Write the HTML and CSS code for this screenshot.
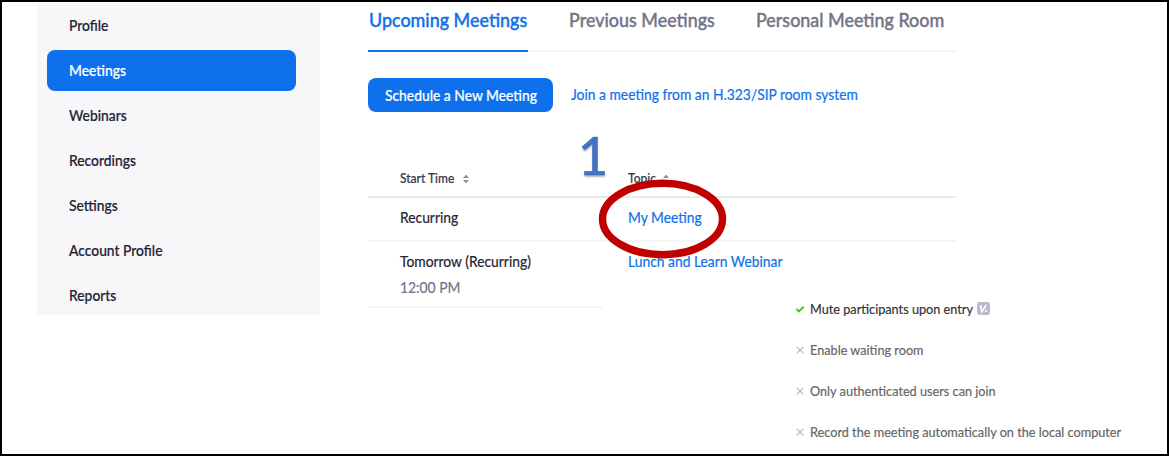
FILE: index.html
```html
<!DOCTYPE html>
<html lang="en">
<head>
  <meta charset="UTF-8" />
  <meta name="viewport" content="width=device-width, initial-scale=1.0"/>
  <title>Meetings</title>
  <link rel="stylesheet" href="styles.css">
</head>
<body>
  <div class="frame">
    <nav class="sidebar">
      <a href="#"><span class="txt">Profile</span></a>
      <a href="#" class="active"><span class="txt">Meetings</span></a>
      <a href="#"><span class="txt">Webinars</span></a>
      <a href="#"><span class="txt">Recordings</span></a>
      <a href="#"><span class="txt">Settings</span></a>
      <a href="#"><span class="txt">Account Profile</span></a>
      <a href="#"><span class="txt">Reports</span></a>
    </nav>

    <main class="content">
      <div class="tabs">
        <a href="#" class="tab selected"><span class="txt">Upcoming Meetings</span></a>
        <a href="#" class="tab"><span class="txt">Previous Meetings</span></a>
        <a href="#" class="tab"><span class="txt">Personal Meeting Room</span></a>
      </div>

      <div class="actions">
        <button class="schedule-btn"><span class="txt">Schedule a New Meeting</span></button>
        <a href="#" class="join-link"><span class="txt">Join a meeting from an H.323/SIP room system</span></a>
      </div>

      <div class="meeting-list">
        <div class="row head">
          <div class="cell"><span class="txt">Start Time</span>
            <svg class="sort" width="6" height="10" viewBox="0 0 6 10"><path d="M0 4L3 0.8L6 4zM0 6L3 9.2L6 6z" fill="#8c8c94"/></svg>
          </div>
          <div class="cell topic"><span class="txt">Topic</span>
            <svg class="sort" width="6" height="10" viewBox="0 0 6 10"><path d="M0 4L3 0.8L6 4zM0 6L3 9.2L6 6z" fill="#8c8c94"/></svg>
          </div>
        </div>
        <div class="row">
          <div class="cell"><span class="txt">Recurring</span></div>
          <div class="cell"><a href="#"><span class="txt">My Meeting</span></a></div>
        </div>
        <div class="row last">
          <div class="cell"><span class="txt">Tomorrow (Recurring)</span><br><span class="txt time">12:00 PM</span></div>
          <div class="cell"><a href="#"><span class="txt">Lunch and Learn Webinar</span></a></div>
        </div>
      </div>

      <ul class="options">
        <li class="on">
          <svg width="10" height="10" viewBox="0 0 10 10"><path d="M1.3 4.9L3.9 7.4L8.7 2.6" fill="none" stroke="#3bc40a" stroke-width="1.8"/></svg>
          <span class="txt">Mute participants upon entry</span>
          <svg class="tag" width="13" height="13" viewBox="0 0 13 13"><rect width="13" height="13" rx="3" fill="#bab9d0"/><path d="M3.4 3.2L5 9.4L9.2 3" fill="none" stroke="#fff" stroke-width="1.7"/><circle cx="9" cy="9" r="1" fill="#fff"/></svg>
        </li>
        <li>
          <svg width="10" height="10" viewBox="0 0 10 10"><path d="M1.8 1.8L8.4 8.4M8.4 1.8L1.8 8.4" stroke="#b4b4b4" stroke-width="1.1"/></svg>
          <span class="txt">Enable waiting room</span>
        </li>
        <li>
          <svg width="10" height="10" viewBox="0 0 10 10"><path d="M1.8 1.8L8.4 8.4M8.4 1.8L1.8 8.4" stroke="#b4b4b4" stroke-width="1.1"/></svg>
          <span class="txt">Only authenticated users can join</span>
        </li>
        <li>
          <svg width="10" height="10" viewBox="0 0 10 10"><path d="M1.8 1.8L8.4 8.4M8.4 1.8L1.8 8.4" stroke="#b4b4b4" stroke-width="1.1"/></svg>
          <span class="txt">Record the meeting automatically on the local computer</span>
        </li>
      </ul>
    </main>

    <!-- step marker over the table -->
    <div class="step">1</div>
    <svg class="ring" width="130" height="82" viewBox="0 0 130 82"><ellipse cx="65.5" cy="41" rx="60" ry="35.7" fill="none" stroke="#c00000" stroke-width="7.4"/></svg>
  </div>
</body>
</html>
```
FILE: styles.css
```css
* {
  box-sizing: border-box;
}
body {
  margin: 0;
  font-family: Lato, sans-serif;
  font-size: 15px;
  color: #232333;
  background: #fff;
}
a {
  color: #0e71eb;
  text-decoration: none;
}
.frame {
  position: relative;
  display: flex;
  align-items: flex-start;
  width: 1169px;
  height: 456px;
  border: 2px solid #000;
  padding-left: 34.5px;
  overflow: hidden;
}
/* narrow Lato */
.txt {
  display: inline-block;
  white-space: nowrap;
  transform: scaleX(0.923);
  transform-origin: left center;
  -webkit-text-stroke: 0.2px currentColor;
}

.sidebar {
  width: 283.5px;
  height: 312px;
  margin-top: 1px;
  padding: 1.7px 24px 0 10px;
  background: #f7f7fa;
  font-weight: 500;
}
.sidebar a {
  display: block;
  height: 41px;
  margin-bottom: 4.1px;
  padding-left: 22px;
  line-height: 40px;
  border-radius: 8px;
  color: #232333;
}
.sidebar a.active {
  background: #0e71eb;
  color: #fff;
}

.content {
  width: 789px;
  margin-left: 48px;
}
.tabs {
  display: flex;
  gap: 40px;
  width: 588px;
  height: 50px;
  border-bottom: 2px solid #f5f5f7;
}
.tab {
  width: 160px;
  height: 50px;
  padding-left: 1px;
  font-size: 19.4px;
  font-weight: 500;
  line-height: 36px;
  color: #747487;
}
.tab .txt {
  -webkit-text-stroke-width: 0.4px;
}
.tab + .tab + .tab {
  width: 190px;
  margin-left: -13px;
}
.tab.selected {
  color: #0e71eb;
  border-bottom: 2px solid #0e71eb;
}

.actions {
  display: flex;
  align-items: center;
  gap: 18px;
  margin-top: 26px;
}
.join-link {
  padding-bottom: 2px;
}
.schedule-btn {
  width: 185px;
  height: 34px;
  padding: 0 0 0 16.5px;
  border: none;
  border-radius: 8px;
  background: #0e71eb;
  color: #fff;
  font: 500 15px Lato, sans-serif;
  text-align: left;
}

.meeting-list {
  width: 588px;
  margin-top: 50px;
}
.row {
  display: flex;
  height: 44px;
  border-bottom: 2px solid #f5f5f7;
}
.cell {
  width: 228.5px;
  padding-left: 31.5px;
  line-height: 38px;
}
.head {
  height: 36px;
  border-bottom: 2px solid #ebebed;
  font-size: 13px;
  font-weight: 500;
  color: #39394d;
}
.head .cell {
  display: flex;
  align-items: center;
  gap: 5px;
  height: 31px;
  line-height: 30px;
}
.sort {
  margin-top: 2px;
}
.row.last {
  width: 234.5px;
  height: 66px;
}
.row.last .cell {
  flex: none;
  padding-top: 6px;
  line-height: 26px;
}
.time {
  color: #747487;
}

.options {
  list-style: none;
  margin: -11px 0 0 427px;
  padding: 0;
  font-size: 13.75px;
  color: #666;
}
.options li {
  display: flex;
  align-items: center;
  gap: 5px;
  height: 41px;
}
.options .txt {
  position: relative;
  top: -1px;
}
.options .on {
  height: 24px;
  margin-bottom: 8.5px;
  color: #333;
}
.options .tag {
  margin: -1px 0 0 -15px;
}

.step {
  position: absolute;
  left: 575px;
  top: 116px;
  font-family: Carlito, Lato, sans-serif;
  font-size: 60px;
  line-height: 73px;
  color: #4472c4;
  -webkit-text-stroke: 0.6px #4472c4;
  text-shadow: 0 2px 2px rgba(0, 0, 0, 0.3);
}
.ring {
  position: absolute;
  left: 595px;
  top: 176px;
}
```
